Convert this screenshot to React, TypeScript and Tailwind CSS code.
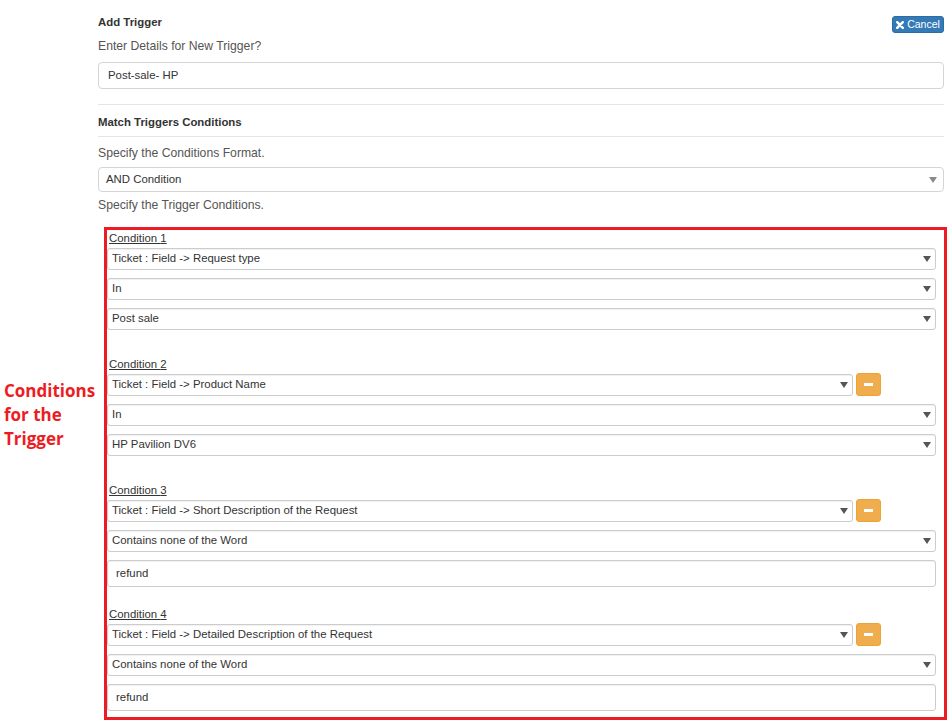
import { Fragment } from "react";

const font = { fontFamily: '"Liberation Sans", Arial, sans-serif' };

function Caret({ light }: { light?: boolean }) {
  return (
    <svg width="8" height="6" viewBox="0 0 8 6" className="shrink-0">
      <path d="M0 0 H8 L4 6 Z" fill={light ? "#8a8a8a" : "#555"} />
    </svg>
  );
}

function FakeSelect({ value, className = "" }: { value: string; className?: string }) {
  return (
    <div
      className={`flex h-[22px] items-center justify-between rounded-[3px] border border-[#cccccc] bg-white pl-[4px] pr-[4px] text-[11.4px] text-[#333] shadow-[inset_0_1px_1px_rgba(0,0,0,0.06)] ${className}`}
    >
      <span>{value}</span>
      <Caret />
    </div>
  );
}

function FakeInput({ value }: { value: string }) {
  return (
    <div className="flex h-[27px] items-center rounded-[3px] border border-[#cccccc] bg-white pl-[8px] text-[11.4px] text-[#333] shadow-[inset_0_1px_1px_rgba(0,0,0,0.06)]">
      {value}
    </div>
  );
}

function MinusButton() {
  return (
    <button
      type="button"
      className="flex h-[23px] w-[25px] shrink-0 items-center justify-center rounded-[3px] border border-[#eea236] bg-[#f0ad4e]"
    >
      <span className="block h-[3px] w-[9px] bg-white" />
    </button>
  );
}

interface Condition {
  field: string;
  operator: string;
  value: string;
  valueIsText?: boolean;
  removable?: boolean;
  gap: string;
}

const conditions: Condition[] = [
  { field: "Ticket : Field -> Request type", operator: "In", value: "Post sale", gap: "mt-0" },
  { field: "Ticket : Field -> Product Name", operator: "In", value: "HP Pavilion DV6", removable: true, gap: "mt-[26px]" },
  {
    field: "Ticket : Field -> Short Description of the Request",
    operator: "Contains none of the Word",
    value: "refund",
    valueIsText: true,
    removable: true,
    gap: "mt-[26px]",
  },
  {
    field: "Ticket : Field -> Detailed Description of the Request",
    operator: "Contains none of the Word",
    value: "refund",
    valueIsText: true,
    removable: true,
    gap: "mt-[19px]",
  },
];

export default function App() {
  return (
    <div className="h-[725px] w-[952px] overflow-hidden bg-white text-[11.4px] text-[#333]" style={font}>
      <div className="pl-[98px] pr-[8px]">
        <div className="flex items-start justify-between pt-[14px]">
          <div className="h-[16px] font-bold leading-[16px]">Add Trigger</div>
          <button
            type="button"
            className="mt-[2px] flex h-[17px] w-[52px] items-center justify-center gap-[3px] rounded-[3px] border border-[#2e6da4] bg-[#337ab7] text-[10.5px] leading-none text-white"
          >
            <svg width="8" height="8" viewBox="0 0 8 8">
              <path d="M1.2 1.2 L6.8 6.8 M6.8 1.2 L1.2 6.8" stroke="white" strokeWidth="2.4" strokeLinecap="round" />
            </svg>
            Cancel
          </button>
        </div>
        <div className="mt-[5px] text-[12.2px] leading-[16px] text-[#555]">Enter Details for New Trigger?</div>
        <div className="mt-[8px] flex h-[27px] items-center rounded-[4px] border border-[#d5d5d5] pl-[9px] text-[#333]">
          Post-sale- HP
        </div>
        <div className="mt-[15px] border-t border-[#e5e5e5]" />
        <div className="mt-[9px] font-bold leading-[16px]">Match Triggers Conditions</div>
        <div className="mt-[6px] border-t border-[#e5e5e5]" />
        <div className="mt-[8px] text-[12.2px] leading-[16px] text-[#555]">Specify the Conditions Format.</div>
        <div className="mt-[6px] flex h-[25px] items-center justify-between rounded-[4px] border border-[#d5d5d5] pl-[7px] pr-[6px]">
          <span>AND Condition</span>
          <Caret light />
        </div>
        <div className="mt-[5px] text-[12.2px] leading-[16px] text-[#555]">Specify the Trigger Conditions.</div>
      </div>

      <div className="mt-[14px] flex">
        <div className="w-[104px] shrink-0 pl-[4px] pt-[152px]">
          <div
            className="text-[17px] font-bold leading-[24px] text-[#ed1c24]"
            style={{ fontFamily: '"Open Sans", Lato, sans-serif' }}
          >
            Conditions
            <br />
            for the
            <br />
            Trigger
          </div>
        </div>
        <div className="w-[843px] shrink-0 border-[3px] border-[#ed1c24] pb-[6px] pr-[8px]">
          {conditions.map((c, i) => (
            <Fragment key={i}>
              <div className={`${c.gap} pl-[2px] leading-[16px] text-[#333] underline`}>Condition {i + 1}</div>
              {c.removable ? (
                <div className="mt-[1px] flex items-center gap-[3px] pr-[55px]">
                  <FakeSelect value={c.field} className="flex-1" />
                  <MinusButton />
                </div>
              ) : (
                <FakeSelect value={c.field} className="mt-[2px]" />
              )}
              <FakeSelect value={c.operator} className="mt-[8px]" />
              <div className="mt-[8px]">
                {c.valueIsText ? <FakeInput value={c.value} /> : <FakeSelect value={c.value} />}
              </div>
            </Fragment>
          ))}
        </div>
      </div>
    </div>
  );
}
